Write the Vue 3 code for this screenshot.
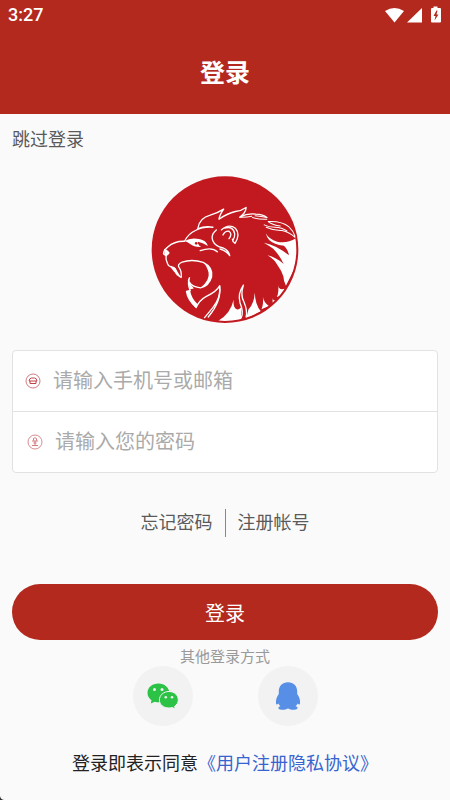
<template>
  <div class="page">
    <header class="header">
      <div class="status-bar">
        <span class="time">3:27</span>
        <svg class="status-icons" width="58" height="18" viewBox="0 0 58 18" fill="#fff">
          <path d="M1 5 Q10.500 -1 20 5 L10.500 16.500 Z" />
          <path d="M38 2 V16.500 H23 Z" />
          <path d="M49.500 0.500 h4 v1.500 h2.500 q1 0 1 1 v12.500 q0 1 -1 1 h-8 q-1 0 -1 -1 v-12.500 q0 -1 1 -1 h1.500 Z" />
          <path d="M52.500 4.500 L49.500 10 H51.500 L50.500 14.500 L54.500 8.500 H52.500 L53.500 4.500 Z" fill="#b3291e" />
        </svg>
      </div>
      <h1 class="title">登录</h1>
    </header>

    <main class="content">
      <a href="#" class="skip" @click.prevent>跳过登录</a>

      <!-- 狮子标志 -->
      <svg class="logo" viewBox="34 34 442 442" role="img">
        <defs>
          <clipPath id="disc"><circle cx="255" cy="254" r="213" /></clipPath>
        </defs>
        <circle cx="255" cy="254" r="219" fill="#c1191f" />
        <g clip-path="url(#disc)" fill="#fff">
          <!-- 鬃毛 -->
          <path d="M377 205 Q386 223 411 230 Q440 236 467 220 L475 252 L468 300 L437 362 Q429 345 430 336 Q424 316 411 299 Q402 283 382 271 Q408 277 430 297 Q418 270 399 251 Q385 241 371 233 Q409 240 446 271 Q443 253 431 242 Q401 239 387 225 Q379 216 377 205 Z" />
          <path d="M413 357 Q415 377 433 371 L426 388 L410 396 Q417 378 413 357 Z" />
          <path d="M398 397 Q397 407 405 406 L398 415 Q396 408 398 397 Z" />
          <path d="M368 394 Q370 411 386 422 L364 432 Q371 416 368 394 Z" />
          <path d="M344 382 Q345 419 362 438 L318 461 L325 433 Q342 415 344 382 Z" />
          <path d="M281 403 Q278 429 292 433 Q300 433 306 421 Q302 444 303 462 L274 471 L235 466 Q271 447 281 403 Z" />
        </g>
        <g fill="none" stroke="#fff" stroke-width="4" stroke-linecap="round" stroke-linejoin="round">
          <!-- 头顶轮廓 -->
          <path d="M174 190 Q179 159 211 151 Q234 144 251 133 Q239 150 237 163 Q261 146 286 140 Q304 138 318 128 Q318 143 299 157 Q324 144 347 148 Q369 149 380 158" />
          <path d="M174 191 Q196 183 219 187 Q188 185 168 196 Q145 206 134 229 Q104 228 84 246 Q69 259 72 267 L80 270 Q77 283 82 291 Q84 303 94 305 L104 318" />
          <!-- 嘴 -->
          <path d="M94 305 Q109 306 112 329 L124 337 Q126 319 119 309 Q110 298 127 291 Q157 281 190 292 Q220 307 215 335 Q207 363 182 368 Q158 366 149 352 Q143 347 149 338 Q142 356 151 376 L140 379 Q143 403 169 427 Q178 405 198 394 Q230 379 239 362 Q244 395 218 428 L194 457" />
          <path d="M239 362 Q245 408 205 455" />
          <!-- 耳朵 -->
          <path d="M244 195 Q267 175 286 190 Q302 208 285 235 Q278 232 277 223 M267 221 Q278 207 267 199 Q256 197 249 210 M252 190 Q279 181 284 207 Q285 216 278 228" />
          <path d="M229 195 Q211 210 219 228 Q225 243 249 249 Q266 256 269 272 Q260 258 240 252" />
          <path d="M181 257 Q216 245 232 260" />
          <path d="M303 458 Q312 441 300 413 Q292 386 310 360 Q300 390 312 411 Q323 438 318 455" />
        </g>
        <g fill="none" stroke="#fff" stroke-width="3" stroke-linecap="round" stroke-linejoin="round">
          <path d="M299 157 Q318 158 335 154 M337 158 Q357 164 380 163 M345 153 Q364 155 380 158" />
          <path d="M372 180 Q385 187 404 187 Q425 188 440 198 M384 170 Q425 168 446 186 Q459 198 464 214 M384 170 Q398 181 420 183 M378 187 Q402 198 425 197 Q447 202 464 217" />
        </g>
        <path fill="#fff" d="M134 228 Q154 216 181 223 Q199 227 204 243 Q188 232 174 230 Q173 239 184 246 Q163 247 151 237 L143 232 Z" />
        <circle cx="169" cy="235" r="4" fill="#c1191f" />
        <path fill="#fff" d="M73 251 Q86 255 90 264 Q84 274 75 274 Z" />
        <path fill="#fff" d="M94 304 L106 308 L122 334 L108 327 Z" />
        <path fill="#fff" d="M190 292 Q220 307 215 335 Q207 363 182 368 Q210 345 206 323 Q202 304 190 292 Z" />
        <path fill="#fff" d="M149 338 Q146 349 153 358 L162 370 L151 372 Q144 359 149 338 Z" />
        <path fill="#fff" d="M140 379 L151 377 Q154 399 174 418 L168 428 Q144 405 140 379 Z" />
      </svg>

      <form class="form" @submit.prevent>
        <div class="fields">
          <div class="field">
            <label for="account">
              <svg width="16" height="16" viewBox="0 0 16 16" fill="none" stroke="#c0434a">
                <circle cx="8" cy="8" r="7" stroke-width="0.7" />
                <path d="M4 8 Q4.500 5 6.500 5 H9.500 Q11.500 5 12 8 Z M5 8 V10.500 H11 V8" stroke-width="1" />
              </svg>
            </label>
            <input id="account" v-model="account" type="text" aria-label="请输入手机号或邮箱" placeholder="请输入手机号或邮箱" />
          </div>
          <div class="field password">
            <label for="password">
              <svg width="16" height="16" viewBox="0 0 16 16" fill="none" stroke="#c95b60">
                <circle cx="8" cy="8" r="7" stroke-width="0.7" />
                <path d="M6.500 6.500 V4.500 Q8 3 9.500 4.500 V6.500 M5 7 H11 M8 7 V11 M6.500 9 H9.500 M5 11.500 H11" stroke-width="0.8" />
              </svg>
            </label>
            <input id="password" v-model="password" type="password" aria-label="请输入您的密码" placeholder="请输入您的密码" />
          </div>
        </div>

        <nav class="links">
          <a href="#" @click.prevent>忘记密码</a>
          <a href="#" @click.prevent>注册帐号</a>
        </nav>

        <button type="submit" class="submit">登录</button>
      </form>

      <!-- 第三方登录 -->
      <p class="other">其他登录方式</p>
      <div class="socials">
        <button type="button" class="social" aria-label="微信">
          <svg width="32" height="26" viewBox="0 0 32 26">
            <path fill="#2bc245" d="M11.500 0.500 C5 0.500 0.500 4.500 0.500 10 C0.500 13 2 15.500 4.500 17.300 L3.800 20.500 L7.800 18.800 C9 19.200 10.500 19.300 12 19.300 C18 19 22.500 15 22.500 10 C22 4.500 17.500 0.500 11.500 0.500 Z" />
            <path fill="#2bc245" stroke="#f2f2f2" stroke-width="1" d="M22 8.500 C16.500 8.500 12.400 12.200 12.400 17 C12.400 21.600 16.500 25 22 25 C23.200 25 24.300 24.800 25.300 24.500 L28.300 26 L27.600 23.300 C30 21.700 31.300 19.500 31.300 17 C31.300 12.200 27.500 8.500 22 8.500 Z" />
            <g fill="#f2f2f2">
              <circle cx="7.500" cy="6.500" r="1.500" />
              <circle cx="15" cy="6.500" r="1.500" />
              <circle cx="18.800" cy="14.300" r="1.300" />
              <circle cx="25" cy="14.300" r="1.300" />
            </g>
          </svg>
        </button>
        <button type="button" class="social" aria-label="QQ">
          <svg width="26" height="28" viewBox="0 0 26 28" fill="#568fe5">
            <path d="M13 0.300 C7.500 0.300 3.800 4 3.800 9.500 V12 C2 14.500 0.500 17.500 1 21.500 Q1.300 23.500 3.500 21.500 Q4 23 5.500 24.300 C2.500 25 2.700 27.500 6.500 27.700 C9.500 28 11.500 27.500 13 26.300 C14.500 27.500 16.500 28 19.500 27.700 C23.300 27.500 23.500 25 20.500 24.300 Q22 23 22.500 21.500 Q24.700 23.500 25 21.500 C25.500 17.500 24 14.500 22.200 12 V9.500 C22.200 4 18.500 0.300 13 0.300 Z" />
          </svg>
        </button>
      </div>

      <p class="agreement">登录即表示同意<a href="#" @click.prevent>《用户注册隐私协议》</a></p>
    </main>

    <!-- 左下角圆角 -->
    <svg class="corner" width="4" height="4" viewBox="0 0 4 4">
      <path d="M0 0 Q0.500 3.500 4 4 H0 Z" fill="#333" />
    </svg>
  </div>
</template>

<script setup>
import { ref } from 'vue';

const account = ref('');
const password = ref('');
</script>

<style>
body {
  margin: 0;
  background: #fafafa;
}
</style>

<style scoped>
.page {
  position: relative;
  min-height: 100vh;
  background: #fafafa;
  color: #5a5a5a;
  font-family: Roboto, "Noto Sans CJK SC", sans-serif;
  font-size: 18px;
  line-height: 24px;
}

a {
  color: inherit;
  text-decoration: none;
}

button,
input {
  font-family: inherit;
  border: none;
  padding: 0;
}

button {
  cursor: pointer;
}

.header {
  height: 114px;
  background: #b3291e;
  color: #fff;
}

.status-bar {
  display: flex;
  justify-content: space-between;
  align-items: center;
  height: 30px;
  padding: 0 8px;
}

.time {
  font-weight: 500;
}

.status-icons {
  display: block;
}

.title {
  margin: 0;
  font-size: 25px;
  font-weight: 700;
  line-height: 88px;
  text-align: center;
}

.content {
  display: flex;
  flex-direction: column;
  padding: 14px 12px 20px;
}

.skip {
  align-self: flex-start;
}

.logo {
  align-self: center;
  width: 148px;
  height: 148px;
  margin-top: 24px;
}

.form {
  margin-top: 26px;
}

.fields {
  background: #fff;
  border: 1px solid #e2e2e2;
  border-radius: 4px;
}

.field {
  display: flex;
  align-items: center;
  gap: 12px;
  height: 60px;
  padding: 0 12px;
}

.field + .field {
  border-top: 1px solid #e2e2e2;
}

.password {
  padding-left: 14px;
}

.field label {
  display: flex;
}

.field input {
  flex: 1;
  min-width: 0;
  height: 40px;
  background: transparent;
  color: #333;
  font-size: 20px;
  outline: none;
}

.field input::placeholder {
  color: #aaa;
  opacity: 1;
}

.links {
  display: flex;
  justify-content: center;
  margin-top: 36px;
  line-height: 28px;
}

.links a {
  padding: 0 12px;
}

.links a + a {
  border-left: 1px solid #888;
}

.submit {
  display: block;
  width: 100%;
  height: 56px;
  margin-top: 47px;
  border-radius: 28px;
  background: #b3291e;
  color: #fff;
  font-size: 20px;
}

.other {
  margin: 5px 0 0;
  color: #999;
  font-size: 15px;
  line-height: 24px;
  text-align: center;
}

.socials {
  display: flex;
  justify-content: center;
  gap: 65px;
  margin-top: -3px;
}

.social {
  display: flex;
  justify-content: center;
  align-items: center;
  width: 60px;
  height: 60px;
  border-radius: 50%;
  background: #f2f2f2;
}

.agreement {
  margin: 26px 0 0;
  color: #222;
  text-align: center;
}

.agreement a {
  color: #3764cf;
}

.corner {
  position: absolute;
  left: 0;
  bottom: 0;
}
</style>
